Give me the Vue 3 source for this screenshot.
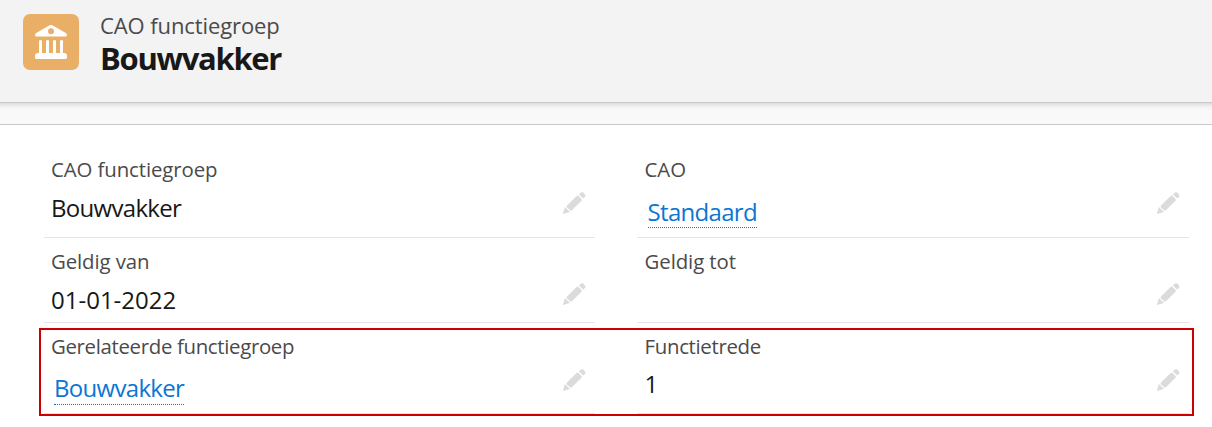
<script setup>
import { ref } from 'vue'

const title = ref('Bouwvakker')
const rows = ref([
    {
        name: 'first',
        fields: [
            { label: 'CAO functiegroep', value: 'Bouwvakker' },
            { label: 'CAO', value: 'Standaard', link: true }
        ]
    },
    {
        name: 'second',
        fields: [
            { label: 'Geldig van', value: '01-01-2022', date: true },
            { label: 'Geldig tot', value: '' }
        ]
    },
    {
        name: 'third',
        fields: [
            { label: 'Gerelateerde functiegroep', value: 'Bouwvakker', link: true },
            { label: 'Functietrede', value: '1' }
        ]
    }
])
</script>

<template>
    <div class="page">
        <header class="header">
            <div class="icon">
                <svg viewBox="0 0 56 56" width="56" height="56">
                    <path d="M26.6 11.3Q28 10.5 29.4 11.3L42.8 19Q44 19.8 44 21Q44 22.5 42.6 22.5H13.4Q12 22.5 12 21Q12 19.8 13.2 19Z" fill="#fff" />
                    <circle cx="28" cy="17.3" r="3" fill="#e9af67" />
                    <path d="M16 27.2Q16 26 17.5 26T19 27.2V39H23V27.2Q23 26 24.5 26T26 27.2V39H30V27.2Q30 26 31.5 26T33 27.2V39H37V27.2Q37 26 38.5 26T40 27.2V39H41Q44 39 44 42V43.5Q44 45 42.5 45H13.5Q12 45 12 43.5V42Q12 39 15 39H16Z" fill="#fff" />
                </svg>
            </div>
            <div class="heading">
                <div class="type">CAO functiegroep</div>
                <h1>{{ title }}</h1>
            </div>
        </header>
        <div class="band"></div>
        <main class="detail">
            <div v-for="row in rows" :key="row.name" class="row" :class="row.name">
                <div v-for="field in row.fields" :key="field.label" class="field">
                    <div class="label">{{ field.label }}</div>
                    <div class="content">
                        <a v-if="field.link" class="link">{{ field.value }}</a>
                        <span v-else class="value" :class="{ date: field.date }">{{ field.value }}</span>
                        <svg class="pencil" viewBox="0 0 24 24" width="24" height="24">
                            <path d="M.8 23L2.9 16L8 21Z" />
                            <path d="M5 14.6L14.6 5Q15.6 4.2 16.6 5L19.5 7.9Q20.2 8.8 19.5 9.7L9.9 19.3Q9 20 8.1 19.3L5 16.4Q4.3 15.5 5 14.6Z" />
                            <path d="M17 3.4L18.8 1.6Q20 .7 21.3 1.6L23 3.4Q23.9 4.7 23 5.9L21.2 7.6Z" />
                        </svg>
                    </div>
                </div>
            </div>
            <div class="marker"></div>
        </main>
    </div>
</template>

<style>
body {
    background: #fff;
}
</style>

<style scoped>
.page {
    height: 427px;
    overflow: hidden;
    font-family: "Open Sans", "Noto Sans", sans-serif;
    color: #181818;
}
.header {
    display: flex;
    box-sizing: border-box;
    height: 103px;
    padding: 14px 23px;
    background: #f3f3f3;
    border-bottom: 1px solid #c9c9c9;
}
.icon {
    width: 56px;
    height: 56px;
    border-radius: 7px;
    background: #e9af67;
}
.heading {
    margin-left: 21px;
}
.type {
    margin-top: -2px;
    line-height: 26px;
    font-size: 22px;
    letter-spacing: -0.1px;
    color: #4a4a4a;
}
h1 {
    margin: 0;
    line-height: 40px;
    font-size: 31px;
    font-weight: 700;
    letter-spacing: -1.3px;
}
.band {
    box-sizing: border-box;
    height: 22px;
    background: linear-gradient(#dedede, #f3f3f3 4px, #f9f9f9 8px);
    border-bottom: 1px solid #c9c9c9;
}
.detail {
    position: relative;
    padding: 0 22px 0 44px;
}
.row {
    display: grid;
    grid-template-columns: 551px 552px;
    column-gap: 42px;
}
.field {
    box-sizing: border-box;
    padding: 0 7px;
    border-bottom: 1px solid #e5e5e5;
}
.field:nth-child(2) {
    padding-left: 7.6px;
}
.first .field {
    height: 113px;
    padding-top: 31px;
}
.second .field {
    height: 85px;
    padding-top: 10px;
}
.third .field {
    height: 91px;
    padding-top: 10px;
}
.label {
    line-height: 26px;
    font-size: 20.4px;
    letter-spacing: -0.1px;
    color: #4a4a4a;
}
.third .label {
    letter-spacing: -0.33px;
}
.content {
    display: flex;
    align-items: flex-start;
    justify-content: space-between;
}
.value {
    margin-top: 10px;
    line-height: 32px;
    font-size: 24px;
    letter-spacing: -0.7px;
}
.third .value {
    margin-top: 9px;
}
.value.date {
    letter-spacing: 0;
}
.link {
    margin: 15px 0 0 3px;
    line-height: 30px;
    font-size: 24px;
    letter-spacing: -0.7px;
    color: #0b76d3;
    border-bottom: 1px dotted #0b76d3;
}
.third .link {
    margin-top: 14px;
    padding-bottom: 1px;
}
.pencil {
    margin: 9px 2px 0 0;
    fill: #dddbda;
}
.second .pencil {
    margin-top: 8px;
}
/* red frame around the related group row */
.marker {
    position: absolute;
    left: 39px;
    top: 203px;
    box-sizing: border-box;
    width: 1155px;
    height: 88px;
    border: 2px solid #c00;
}
</style>
